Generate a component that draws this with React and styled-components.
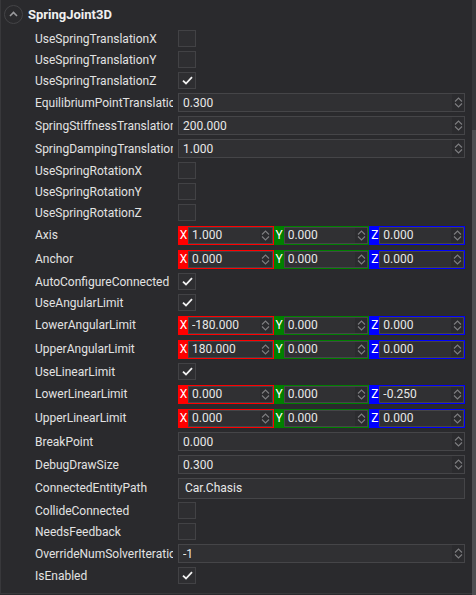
import React from 'react'
import styled, { createGlobalStyle } from 'styled-components'

const Global = createGlobalStyle`
  html, body {
    margin: 0;
    padding: 0;
    background: #2a2a2d;
  }
  * { box-sizing: border-box; }
`

const Panel = styled.div`
  width: 476px;
  height: 595px;
  display: flex;
  background: #2a2a2d;
  font-family: Roboto, "Liberation Sans", sans-serif;
  color: #e6e6e6;
  overflow: hidden;
`

const Body = styled.div`
  flex: 1;
  height: 594px;
  border-left: 1px solid #38383b;
  border-bottom: 1px solid #38383b;
  display: flex;
  flex-direction: column;
`

const Header = styled.div`
  height: 28px;
  display: flex;
  align-items: center;
  gap: 5px;
  padding-left: 3px;
  font-weight: 700;
  font-size: 13px;
  color: #f0f0f0;
`

const Toggle = styled.div`
  width: 19px;
  height: 19px;
  border-radius: 50%;
  border: 1px solid #444447;
  display: flex;
  align-items: center;
  justify-content: center;
`

const Row = styled.div`
  height: ${p => p.h}px;
  display: flex;
  align-items: center;
  padding-left: 34px;
`

const Label = styled.div`
  width: 138px;
  margin-right: 5px;
  font-size: 12px;
  white-space: nowrap;
  overflow: hidden;
  color: #e2e2e2;
`

const Check = styled.div`
  width: 18px;
  height: 17px;
  border: 1px solid #424245;
  background: #2e2e31;
  display: flex;
  align-items: center;
  justify-content: center;
`

const Field = styled.div`
  width: 287px;
  height: ${p => p.h || 19}px;
  display: flex;
  align-items: center;
  background: #303033;
  border: 1px solid #454548;
  font-size: 12px;
  color: #e8e8e8;
  padding-left: ${p => p.pad || 4}px;
`

const FieldText = styled.div`
  flex: 1;
  white-space: nowrap;
  overflow: hidden;
`

const Spin = styled.div`
  width: 12px;
  height: 100%;
  background: #2b2b2e;
  display: flex;
  flex-direction: column;
  align-items: center;
  justify-content: center;
  gap: 1px;
`

const Vector = styled.div`
  width: 287px;
  height: 19px;
  display: flex;
`

const Comp = styled.div`
  flex: 1;
  display: flex;
  border: 1px solid ${p => p.c};
  min-width: 0;
`

const Axis = styled.div`
  width: 9px;
  background: ${p => p.c};
  color: #fff;
  font-size: 12px;
  display: flex;
  align-items: center;
  justify-content: center;
`

const CompInput = styled.div`
  flex: 1;
  display: flex;
  align-items: center;
  background: #303033;
  border: 1px solid #454548;
  font-size: 12px;
  color: #e8e8e8;
  padding-left: 3px;
  min-width: 0;
`

const Scroll = styled.div`
  width: 4px;
  height: 595px;
  display: flex;
  flex-direction: column;
  background: #4e4e51;
`

const Track = styled.div`
  height: 130px;
  background: #363639;
`

const Chev = ({ up }) => (
  <svg width="9" height="5" viewBox="0 0 9 5">
    <path d={up ? 'M1 4.5 L4.5 1 L8 4.5' : 'M1 0.5 L4.5 4 L8 0.5'} fill="none" stroke="#7d7d80" strokeWidth="1.1" />
  </svg>
)

const Spinner = () => (
  <Spin>
    <Chev up />
    <Chev />
  </Spin>
)

const Tick = () => (
  <svg width="11" height="9" viewBox="0 0 11 9">
    <path d="M1 4.6 L4 7.5 L10 1.2" fill="none" stroke="#f2f2f2" strokeWidth="1.8" />
  </svg>
)

const CheckRow = ({ label, on }) => (
  <Row h={21}>
    <Label>{label}</Label>
    <Check>{on && <Tick />}</Check>
  </Row>
)

const NumRow = ({ label, value }) => (
  <Row h={23}>
    <Label>{label}</Label>
    <Field>
      <FieldText>{value}</FieldText>
      <Spinner />
    </Field>
  </Row>
)

const VecRow = ({ label, v }) => (
  <Row h={24}>
    <Label>{label}</Label>
    <Vector>
      {[['X', '#ff0000'], ['Y', '#008000'], ['Z', '#0000ff']].map(([a, c], i) => (
        <Comp key={a} c={c}>
          <Axis c={c}>{a}</Axis>
          <CompInput>
            <FieldText>{v[i]}</FieldText>
            <Spinner />
          </CompInput>
        </Comp>
      ))}
    </Vector>
  </Row>
)

const App = () => (
  <Panel>
    <Global />
    <Body>
      <Header>
        <Toggle>
          <svg width="9" height="6" viewBox="0 0 9 6">
            <path d="M1 5 L4.5 1.5 L8 5" fill="none" stroke="#9a9a9d" strokeWidth="1.6" />
          </svg>
        </Toggle>
        SpringJoint3D
      </Header>
      <CheckRow label="UseSpringTranslationX" />
      <CheckRow label="UseSpringTranslationY" />
      <CheckRow label="UseSpringTranslationZ" on />
      <NumRow label="EquilibriumPointTranslation" value="0.300" />
      <NumRow label="SpringStiffnessTranslation" value="200.000" />
      <NumRow label="SpringDampingTranslation" value="1.000" />
      <CheckRow label="UseSpringRotationX" />
      <CheckRow label="UseSpringRotationY" />
      <CheckRow label="UseSpringRotationZ" />
      <VecRow label="Axis" v={['1.000', '0.000', '0.000']} />
      <VecRow label="Anchor" v={['0.000', '0.000', '0.000']} />
      <CheckRow label="AutoConfigureConnected" on />
      <CheckRow label="UseAngularLimit" on />
      <VecRow label="LowerAngularLimit" v={['-180.000', '0.000', '0.000']} />
      <VecRow label="UpperAngularLimit" v={['180.000', '0.000', '0.000']} />
      <CheckRow label="UseLinearLimit" on />
      <VecRow label="LowerLinearLimit" v={['0.000', '0.000', '-0.250']} />
      <VecRow label="UpperLinearLimit" v={['0.000', '0.000', '0.000']} />
      <NumRow label="BreakPoint" value="0.000" />
      <NumRow label="DebugDrawSize" value="0.300" />
      <Row h={24}>
        <Label>ConnectedEntityPath</Label>
        <Field h={21} pad={6}>
          <FieldText>Car.Chasis</FieldText>
        </Field>
      </Row>
      <CheckRow label="CollideConnected" />
      <CheckRow label="NeedsFeedback" />
      <NumRow label="OverrideNumSolverIterations" value="-1" />
      <CheckRow label="IsEnabled" on />
    </Body>
    <Scroll>
      <Track />
    </Scroll>
  </Panel>
)

export default App
